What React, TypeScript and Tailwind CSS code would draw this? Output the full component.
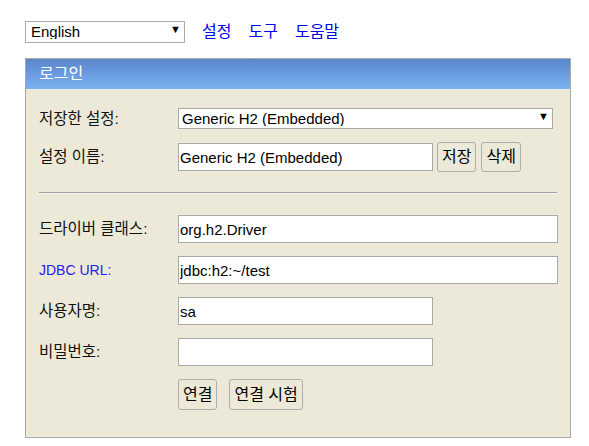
const FONT = { fontFamily: '"Liberation Sans", "Noto Sans CJK KR", Arial, sans-serif' };

function Label({ children, blue }: { children: React.ReactNode; blue?: boolean }) {
  return (
    <div className={`w-[139px] shrink-0 leading-none ${blue ? 'text-[14px] text-[#2222ee]' : 'text-[15.5px] text-[#111]'}`}>
      {children}
    </div>
  );
}

function TextInput({ value, wide }: { value: string; wide?: boolean }) {
  return (
    <input
      readOnly
      value={value}
      className={`${wide ? 'w-[380px]' : 'w-[255px]'} h-[28px] border border-[#a9a9a9] bg-white px-[1px] text-[15px] text-black outline-none`}
      style={FONT}
    />
  );
}

function Btn({ children, tall }: { children: React.ReactNode; tall?: boolean }) {
  return (
    <button
      className={`${tall ? 'h-[31px]' : 'h-[30px]'} px-[4px] border border-[#adadad] rounded-[3px] bg-[#ece9d8] text-[16px] leading-none text-black`}
      style={FONT}
    >
      {children}
    </button>
  );
}

export default function App() {
  return (
    <div className="min-h-screen bg-white pl-[25px] pt-[21px]" style={FONT}>
      {/* top bar */}
      <div className="flex items-center h-[22px]">
        <div className="relative">
          <select
            className="appearance-none w-[160px] h-[22px] border border-[#a9a9a9] bg-white pl-[5px] text-[15px] leading-none text-black outline-none"
            style={FONT}
            defaultValue="English"
          >
            <option>English</option>
          </select>
          <span className="pointer-events-none absolute right-[4px] top-[4px] text-[11px] leading-none text-black">▼</span>
        </div>
        <div className="flex gap-[17px] ml-[17px] text-[16px] leading-none text-[#0000ee]">
          <a>설정</a>
          <a>도구</a>
          <a>도움말</a>
        </div>
      </div>

      {/* login panel */}
      <div className="mt-[15px] w-[546px] border border-[#a9a9a9]">
        <div className="h-[30px] bg-gradient-to-b from-[#5986cb] to-[#7bb2f2] pl-[13px] flex items-center text-[16px] leading-none text-white">
          로그인
        </div>
        <div className="bg-[#ece9d8] pl-[13px] pt-[19px] pb-[27px]">
          <div className="flex items-center h-[21px]">
            <Label>저장한 설정:</Label>
            <div className="relative">
              <select
                className="appearance-none w-[375px] h-[21px] border border-[#a9a9a9] bg-white pl-[3px] text-[15px] leading-none text-black outline-none"
                style={FONT}
                defaultValue="Generic H2 (Embedded)"
              >
                <option>Generic H2 (Embedded)</option>
              </select>
              <span className="pointer-events-none absolute right-[4px] top-[4px] text-[11px] leading-none text-black">▼</span>
            </div>
          </div>

          <div className="flex items-center h-[30px] mt-[13px]">
            <Label>설정 이름:</Label>
            <TextInput value="Generic H2 (Embedded)" />
            <div className="flex gap-[5px] ml-[4px]">
              <Btn>저장</Btn>
              <Btn>삭제</Btn>
            </div>
          </div>

          <div className="mt-[20px] w-[518px] border-t border-[#a0a0a0] border-b border-b-[#f8f8f4]" />

          <div className="flex flex-col gap-[13px] mt-[21px]">
            <div className="flex items-center h-[28px]">
              <Label>드라이버 클래스:</Label>
              <TextInput value="org.h2.Driver" wide />
            </div>
            <div className="flex items-center h-[28px]">
              <Label blue>JDBC URL:</Label>
              <TextInput value="jdbc:h2:~/test" wide />
            </div>
            <div className="flex items-center h-[28px]">
              <Label>사용자명:</Label>
              <TextInput value="sa" />
            </div>
            <div className="flex items-center h-[28px]">
              <Label>비밀번호:</Label>
              <TextInput value="" />
            </div>
            <div className="flex h-[31px] pl-[139px] gap-[12px]">
              <Btn tall>연결</Btn>
              <Btn tall>연결 시험</Btn>
            </div>
          </div>
        </div>
      </div>
    </div>
  );
}
